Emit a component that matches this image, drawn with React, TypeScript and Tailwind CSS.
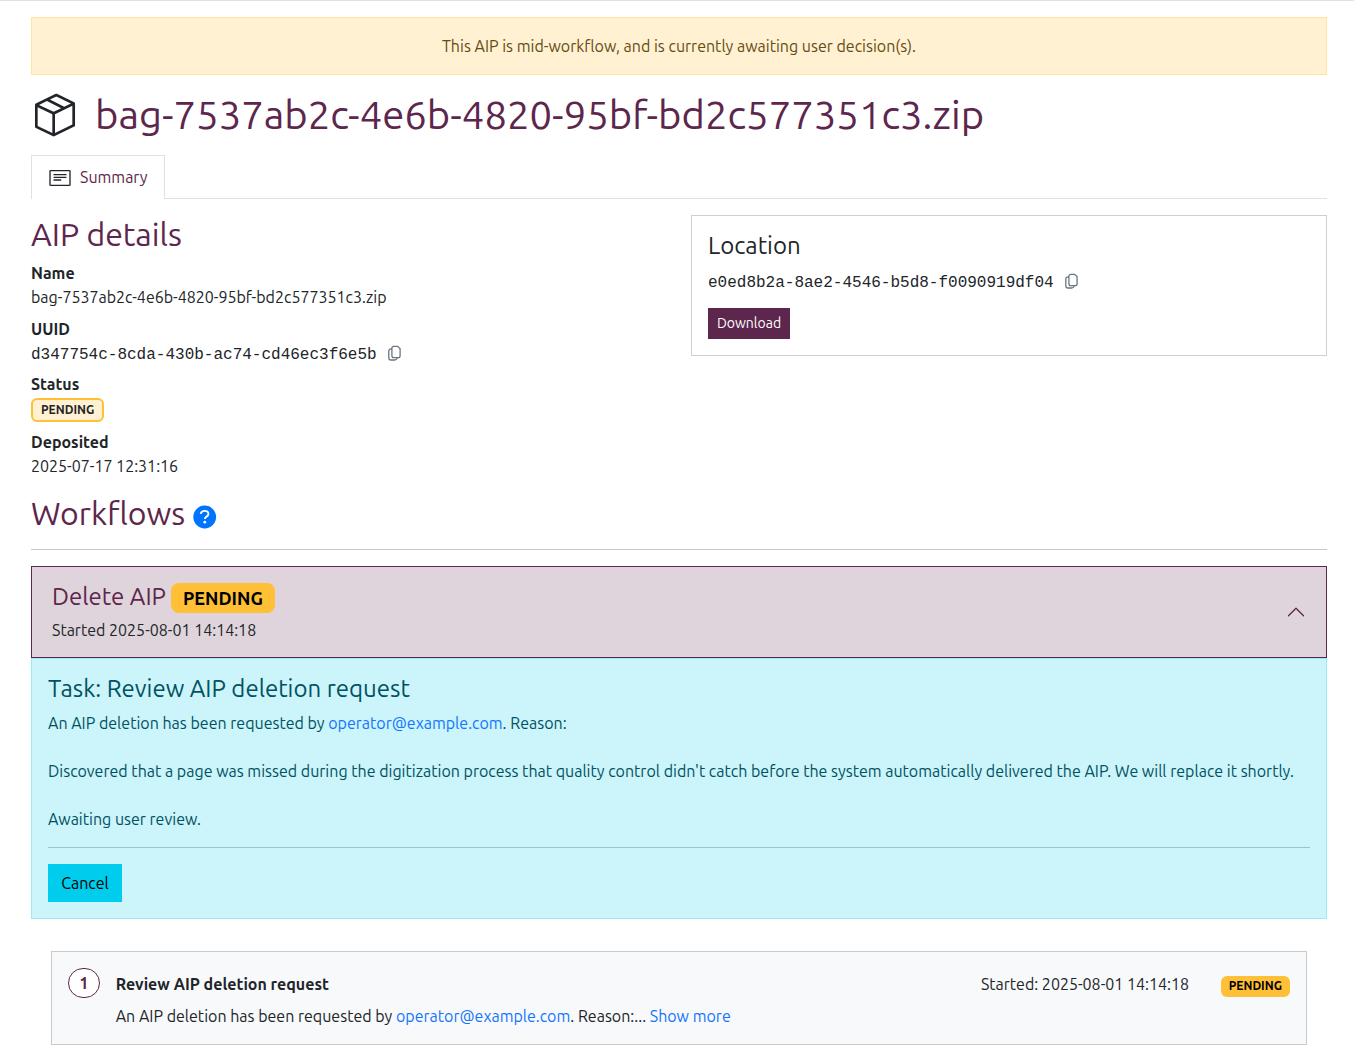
function BundleIcon() {
  return (
    <svg viewBox="0 0 36 36" className="size-12 shrink-0 text-[#212529]" fill="currentColor">
      <path d="M32.43 8.35l-13-6.21a1 1 0 0 0-.87 0l-15 7.24a1 1 0 0 0-.57.9v16.55a1 1 0 0 0 .6.92l13 6.19a1 1 0 0 0 .87 0l15-7.24a1 1 0 0 0 .57-.9V9.25a1 1 0 0 0-.6-.9zM19 4.15l10.93 5.22-5.05 2.44-10.67-5.35zM17 15.64L6 10.41l5.9-2.85L22.6 12.91zM5 12.13l11 5.27v14.06L5 26.2zm13 19.34V17.4l13-6.29v14.04z" />
    </svg>
  );
}

function DetailsIcon() {
  return (
    <svg viewBox="0 0 36 36" className="size-6 shrink-0 text-[#212529]" fill="currentColor">
      <path d="M32 6H4a2 2 0 0 0-2 2v20a2 2 0 0 0 2 2h28a2 2 0 0 0 2-2V8a2 2 0 0 0-2-2zm0 22H4V8h28z" />
      <path d="M9 14h18a1 1 0 0 0 0-2H9a1 1 0 0 0 0 2zM9 18h18a1 1 0 0 0 0-2H9a1 1 0 0 0 0 2zM9 22h10a1 1 0 0 0 0-2H9a1 1 0 0 0 0 2z" />
    </svg>
  );
}

function CopyIcon() {
  return (
    <svg viewBox="0 0 16 16" className="size-4 shrink-0 text-[#6c757d]" fill="none" stroke="currentColor" strokeWidth="1.3">
      <path d="M6.8 1.35h3.9l2.4 2.5v6.9a1.9 1.9 0 0 1-1.9 1.9H6.8a1.9 1.9 0 0 1-1.9-1.9v-7.5a1.9 1.9 0 0 1 1.9-1.9z" />
      <path d="M4.9 3.9h-.7a2.2 2.2 0 0 0-2.4 2.3v6.6A2.2 2.2 0 0 0 4 15h3.6a2.4 2.4 0 0 0 2.5-2.3" />
    </svg>
  );
}

function HelpIcon() {
  return (
    <svg viewBox="0 0 24 24" className="size-6 shrink-0">
      <circle cx="11.7" cy="12" r="11.4" fill="#0073ff" />
      <path d="M7.7 8.9c.4-2 1.9-3 4-3 2.2 0 3.7 1.1 3.7 3 0 1.3-.8 2-1.9 2.7-1.1.7-1.6 1.2-1.6 2.5" fill="none" stroke="white" strokeWidth="1.9" />
      <circle cx="11.8" cy="17.2" r="1.4" fill="white" />
    </svg>
  );
}

function Email() {
  return <a className="text-[#1375fd]">operator@example.com</a>;
}

export default function App() {
  return (
    <div className="min-h-[1060px] border-t border-[#dee2e6] bg-white pt-4 pr-[27px] pl-[31px] font-['Ubuntu','Noto_Sans',sans-serif] text-base text-[#212529]">
      <div className="border border-[#ffe69c] bg-[#fff1d1] p-4 text-center text-[#664c14]">
        This AIP is mid-workflow, and is currently awaiting user decision(s).
      </div>

      <h1 className="mt-4 flex gap-4 text-[40px] leading-[48px] text-[#5d264c]">
        <BundleIcon />
        bag-7537ab2c-4e6b-4820-95bf-bd2c577351c3.zip
      </h1>

      <nav className="mt-4 flex border-b border-[#dee2e6]">
        <a className="-mb-px flex h-11 items-center gap-2 border border-b-0 border-[#dee2e6] bg-white px-4 text-[#5d264c]">
          <DetailsIcon />
          <span className="pb-0.5">Summary</span>
        </a>
      </nav>

      <div className="mt-4 grid grid-cols-2 items-start gap-6">
        <section>
          <h2 className="mb-2 text-[32px] leading-[38.4px] text-[#5d264c]">AIP details</h2>
          <dl>
            <dt className="font-bold">Name</dt>
            <dd className="mb-2">bag-7537ab2c-4e6b-4820-95bf-bd2c577351c3.zip</dd>
            <dt className="font-bold">UUID</dt>
            <dd className="mb-[7px] flex h-6 items-center gap-2.5">
              <span className="pt-1 font-['Liberation_Mono',monospace]">d347754c-8cda-430b-ac74-cd46ec3f6e5b</span>
              <CopyIcon />
            </dd>
            <dt className="font-bold">Status</dt>
            <dd className="mb-[7px] flex h-[27px] items-end pb-px">
              <span className="rounded-md border-2 border-[#ffbf37] bg-[#fff1d1] px-2 py-1 text-xs leading-3 font-bold">PENDING</span>
            </dd>
            <dt className="font-bold">Deposited</dt>
            <dd>2025-07-17 12:31:16</dd>
          </dl>
        </section>

        <section className="h-[141px] border border-[#ced0d2] p-4">
          <h4 className="mb-2 text-2xl leading-[28.8px]">Location</h4>
          <div className="mb-[15px] flex h-6 items-center gap-2.5">
            <span className="pt-1 font-['Liberation_Mono',monospace]">e0ed8b2a-8ae2-4546-b5d8-f0090919df04</span>
            <CopyIcon />
          </div>
          <button className="block h-[31px] w-[82px] bg-[#5d264c] text-sm text-white">Download</button>
        </section>
      </div>

      <div className="mt-4 flex items-center gap-2 border-b border-[#c7c8c9] pb-4">
        <h2 className="text-[32px] leading-[38.4px] text-[#5d264c]">Workflows</h2>
        <span className="mt-1.5">
          <HelpIcon />
        </span>
      </div>

      <div className="mt-4 flex h-[92px] items-center justify-between border border-[#5d264c] bg-[#dfd4db] px-5">
        <div>
          <div className="mt-px mb-[5px] flex items-center gap-[5px]">
            <h4 className="text-2xl leading-[28.8px] text-[#5d264c]">Delete AIP</h4>
            <span className="rounded-lg bg-[#ffbf37] px-3 py-1.5 text-lg leading-[18px] font-bold text-black">PENDING</span>
          </div>
          <div>Started 2025-08-01 14:14:18</div>
        </div>
        <svg viewBox="0 0 16 16" className="size-5 text-[#5d264c]" fill="none" stroke="currentColor" strokeLinecap="round" strokeLinejoin="round">
          <path d="M2 11l6-6 6 6" />
        </svg>
      </div>

      <div className="border border-[#99ebf8] bg-[#ccf4fb] p-4 text-[#00525f]">
        <h4 className="mb-[7px] text-2xl leading-[28.8px]">Task: Review AIP deletion request</h4>
        <p>
          An AIP deletion has been requested by <Email />. Reason:
        </p>
        <p className="mt-6 whitespace-nowrap">
          Discovered that a page was missed during the digitization process that quality control didn't catch before the system automatically delivered the AIP. We will replace it shortly.
        </p>
        <p className="mt-6">Awaiting user review.</p>
        <hr className="my-4 border-[#99c4cb]" />
        <button className="block h-[38px] w-[74px] bg-[#00ccee] text-black">Cancel</button>
      </div>

      <div className="mx-5 mt-8 flex gap-4 border border-[#c8cacc] bg-[#f8f9fa] p-4">
        <span className="flex h-[30px] w-8 shrink-0 items-center justify-center rounded-full border border-[#5d264c] bg-white font-bold text-[#5d264c]">1</span>
        <div className="-ml-[0.3px] flex-1 pt-1">
          <div className="mb-2 flex h-6 items-center">
            <span className="flex-1 font-bold">Review AIP deletion request</span>
            <span className="mr-[31.7px]">Started: 2025-08-01 14:14:18</span>
            <span className="mt-[5px] rounded-md bg-[#ffbf37] px-2 pt-1 pb-[5px] text-xs leading-3 font-bold text-black">PENDING</span>
          </div>
          <p>
            An AIP deletion has been requested by <Email />. Reason:... <a className="text-[#1375fd]">Show more</a>
          </p>
        </div>
      </div>
    </div>
  );
}
